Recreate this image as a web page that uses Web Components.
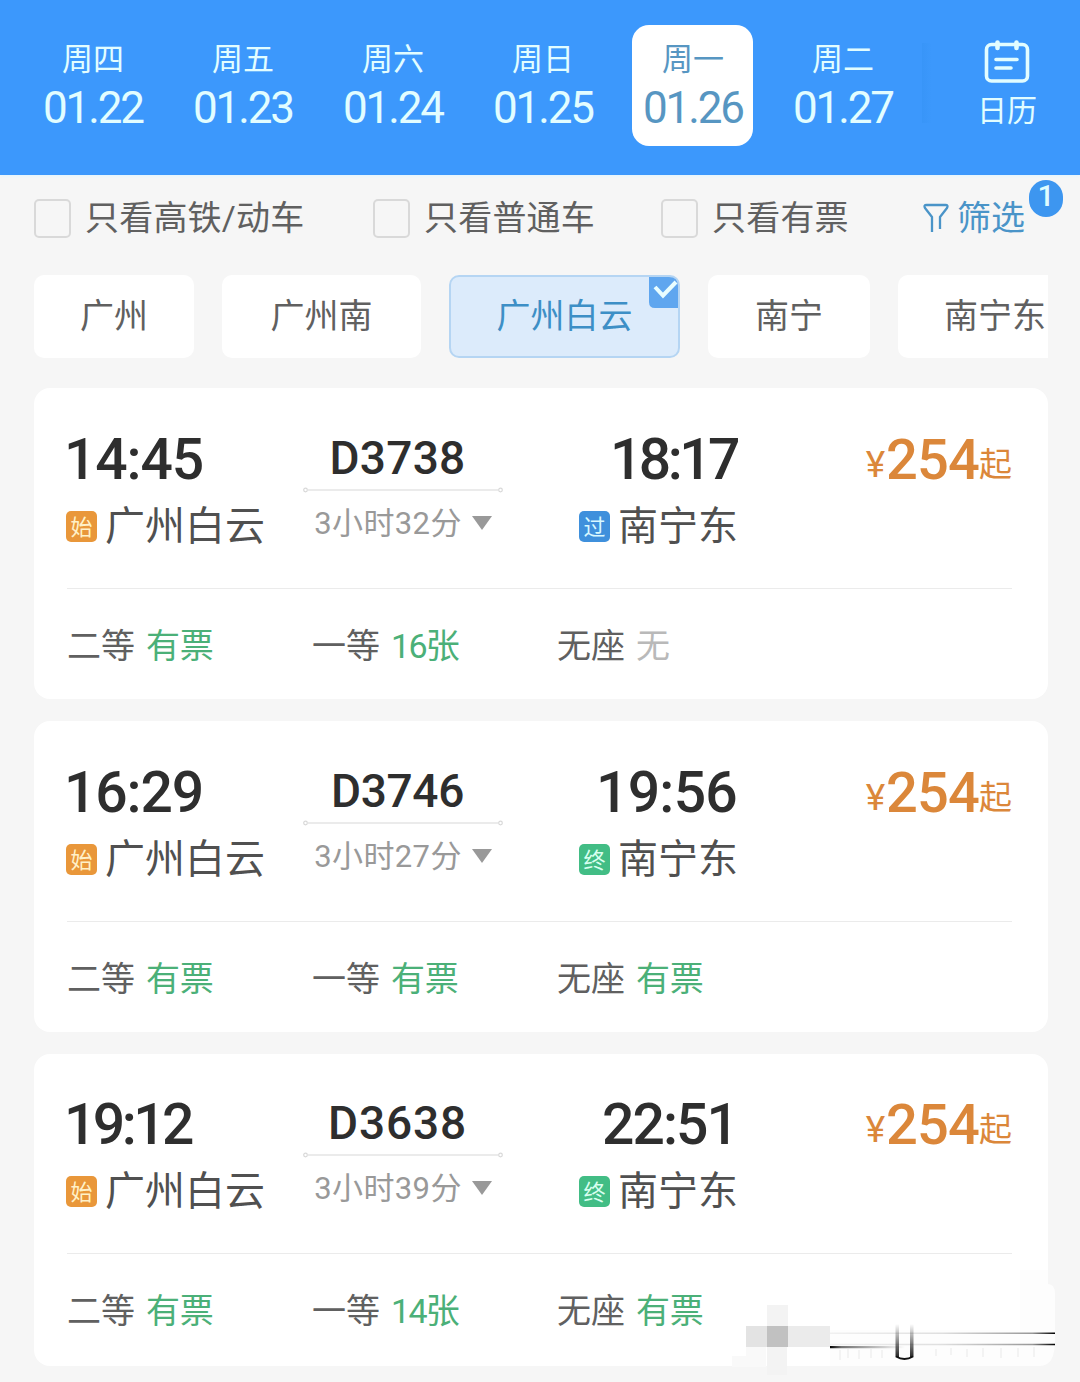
<!DOCTYPE html>
<html lang="zh-CN">
<head>
<meta charset="utf-8">
<title>广州 - 南宁</title>
<style>
    body {
        margin: 0;
        width: 1080px;
        height: 1382px;
        overflow: hidden;
        position: relative;
        background: #f6f6f6;
        color: #555;
        font-family: Roboto, "Noto Sans CJK SC", sans-serif;
    }
</style>
</head>
<body>
<train-app></train-app>
<script>
function define(name, html, setup) {
    customElements.define(name, class extends HTMLElement {
        constructor() {
            super();
            this.attachShadow({mode:'open'}).innerHTML = html;
        }
        connectedCallback() {
            if (setup) setup.call(this, this.shadowRoot);
        }
    });
}

/* text that is tracked to a given width */
define('fit-text', `
    <style>
        :host { display:block; white-space:nowrap; }
        span { display:inline-block; }
    </style>
    <span><slot></slot></span>
`, function(root) {
    const span = root.querySelector('span');
    const n = this.textContent.length;
    const space = (this.getAttribute('width') - span.getBoundingClientRect().width) / n;
    span.style.letterSpacing = space + 'px';
});

/* date bar */
define('day-tab', `
    <style>
        :host { display:flex; justify-content:center; color:#e2fdff; }
        .box {
            width:121px; height:121px;
            box-sizing:border-box;
            padding-top:13px;
            margin-left:-1px;
            border-radius:17px;
            display:flex; flex-direction:column; align-items:center;
        }
        :host([selected]) .box { background:#fff; color:#5796c2; }
        .week { font-size:31px; line-height:42px; padding:1px 0 0 1px; }
        .date { font-size:44px; line-height:54px; padding-left:1px; }
    </style>
    <div class=box>
        <div class=week><slot></slot></div>
    </div>
`, function(root) {
    const date = document.createElement('fit-text');
    date.className = 'date';
    date.setAttribute('width', 100);
    date.textContent = this.getAttribute('date');
    root.querySelector('.box').append(date);
});

define('calendar-button', `
    <style>
        :host {
            display:flex; flex-direction:column; align-items:center;
            box-sizing:border-box;
            padding:15px 0 0 16px;
            color:#e2fdff; font-size:30px; line-height:42px;
        }
        svg { display:block; margin-bottom:5px; }
    </style>
    <svg width=46 height=45 viewBox="0 0 46 45" fill=none stroke=currentColor stroke-width=4 stroke-linecap=round stroke-linejoin=round>
        <rect x=2.500 y=4.500 width=41 height=36.500 rx=5 stroke-width=3.600 />
        <path d="M13.500 2.500V8M32.500 2.500V8" stroke-width=4.600 />
        <path d="M12 19.500H33M12 28H27" stroke-width=3.600 />
    </svg>
    <slot></slot>
`);

define('date-bar', `
    <style>
        :host {
            display:grid;
            grid-template-columns:repeat(6, 150px) 1fr;
            height:175px;
            box-sizing:border-box;
            padding:25px 0 0 18px;
            background:#3c98fc;
            box-shadow:0 1px 4px #dff5ff;
        }
        calendar-button { background:linear-gradient(90deg, #3895f8, #3c98fc) 4px 18px / 10px 80px no-repeat; }
    </style>
    <slot></slot>
    <calendar-button>日历</calendar-button>
`);

/* filters */
define('check-option', `
    <style>
        :host { display:flex; align-items:center; gap:14px; font-size:34px; line-height:46px; color:#606060; }
        i { width:37px; height:39px; box-sizing:border-box; border:2px solid #d9d9d9; border-radius:5px; }
        span { letter-spacing:.2px; }
    </style>
    <i></i><span><slot></slot></span>
`);

define('filter-button', `
    <style>
        :host { display:flex; align-items:center; position:relative; gap:8px; font-size:34px; line-height:46px; color:#4a94c8; }
        b {
            position:absolute; left:106px; top:-15px;
            width:34px; height:37px;
            border-radius:17px;
            background:#3d96f0; color:#dffcff;
            font:500 30px/32px Roboto, sans-serif;
            text-align:center;
        }
    </style>
    <svg width=26 height=32 viewBox="0 0 26 32" fill=none stroke=currentColor stroke-width=2.300 stroke-linejoin=round>
        <path d="M9 30V15L2 6Q0.500 3 3.500 3H22.500Q25.500 3 24 6L17 15V27"/>
    </svg>
    <span><slot></slot></span>
    <b>1</b>
`);

define('filter-row', `
    <style>
        :host {
            display:grid;
            grid-template-columns:339px 288px 262px 1fr;
            height:86px;
            box-sizing:border-box;
            padding:20px 0 0 34px;
            align-items:start;
        }
    </style>
    <slot></slot>
`);

define('station-chip', `
    <style>
        :host {
            flex:none;
            display:flex; justify-content:center; align-items:center;
            position:relative;
            height:83px;
            box-sizing:border-box;
            padding-bottom:2px;
            border-radius:10px;
            background:#fff;
            font-size:34px; line-height:46px;
            color:#606060;
        }
        :host([selected]) { background:#dcebfb; border:2px solid #b5d5f3; color:#3d8fc6; }
        svg { display:none; position:absolute; right:0; top:0; }
        :host([selected]) svg { display:block; }
    </style>
    <slot></slot>
    <svg width=29 height=31 viewBox="0 0 29 31">
        <path d="M0 0H20Q29 0 29 9V31H6Q0 31 0 25Z" fill="#5fa6ef"/>
        <path d="M6 10L14 18.500L27 5" fill=none stroke="#e8fdff" stroke-width=4 />
    </svg>
`, function() {
    this.style.width = this.getAttribute('width') + 'px';
});

define('chip-row', `
    <style>
        :host { display:flex; gap:28px; margin:14px 32px 0 34px; overflow:hidden; }
    </style>
    <slot></slot>
`);

/* trains */
define('stop-tag', `
    <style>
        :host {
            flex:none;
            width:31px; height:31px;
            border-radius:5px;
            background:#e9973a;
            color:#fff1c8;
            font-size:22px; line-height:33px;
            text-align:center;
        }
        :host([kind=过]) { background:#3f90dc; color:#d8f8ff; }
        :host([kind=终]) { background:#42bd85; color:#d9fff0; }
    </style>
    <span></span>
`, function(root) {
    root.querySelector('span').textContent = this.getAttribute('kind');
});

define('seat-item', `
    <style>
        :host { display:flex; gap:12px; color:#606060; }
        .left { margin-left:-1px; color:#4bb078; letter-spacing:-.2px; }
        .left.count { letter-spacing:-1.700px; }
        :host([none]) .left { color:#b9b9b9; }
    </style>
    <span><slot></slot></span><span class=left></span>
`, function(root) {
    const left = root.querySelector('.left');
    left.textContent = this.getAttribute('left');
    left.classList.toggle('count', /\d/.test(left.textContent));
});

define('train-card', `
    <style>
        :host {
            display:block;
            height:311px;
            box-sizing:border-box;
            padding:calc(42px - var(--lift, 0px)) 36px 0 33px;
            border-radius:16px;
            background:#fff;
        }
        .trip {
            display:grid;
            grid-template-columns:236px 200px 235px 1fr;
            height:158px;
        }
        .time { font-size:57px; font-weight:500; line-height:60px; margin-left:-3px; color:#2e2e2e; }
        .stop { display:flex; align-items:center; gap:8px; margin:12px 0 0 -1px; font-size:40px; line-height:50px; color:#505050; }
        .stop stop-tag { margin-top:-1px; }
        .arrive { display:flex; flex-direction:column; align-items:flex-end; }
        .arrive .time { margin-right:1px; }
        .mid { display:flex; flex-direction:column; align-items:center; }
        .no { font-size:46px; font-weight:500; line-height:57px; margin-right:11px; color:#2e2e2e; }
        .mid svg { display:block; margin-top:-1px; }
        .time-used { display:flex; align-items:center; gap:10px; margin-top:7px; font-size:31px; line-height:46px; color:#999; letter-spacing:.4px; }
        .time-used i { border:solid transparent; border-width:14px 10.500px 0; border-top-color:#999; margin-top:-2px; }
        .price { display:flex; justify-content:flex-end; align-items:baseline; height:60px; line-height:60px; color:#db873a; font-size:33px; }
        .price b { font-size:56px; font-weight:500; }
        .price .yen { font-size:37px; width:21px; text-align:center; position:relative; top:-2px; }
        .price .from { position:relative; top:-3px; }
        .seats {
            display:grid;
            grid-template-columns:repeat(3, 245px);
            padding-top:34px;
            border-top:1px solid #ebebeb;
            font-size:34px; line-height:46px;
        }
    </style>
    <div class=trip></div>
    <div class=seats><slot></slot></div>
`, function(root) {
    const a = name => this.getAttribute(name);
    root.querySelector('.trip').innerHTML = `
        <div>
            <fit-text class=time width="${a('w1')}">${a('start')}</fit-text>
            <div class=stop><stop-tag kind=始></stop-tag><span>${a('from')}</span></div>
        </div>
        <div class=mid>
            <fit-text class=no width="${a('w2')}">${a('no')}</fit-text>
            <svg width=200 height=8 viewBox="0 0 200 8" fill=none stroke="#d8d8d8" stroke-width=1.200>
                <circle cx=2.500 cy=4 r=1.800 /><circle cx=197.500 cy=4 r=1.800 /><path d="M5 4H195"/>
            </svg>
            <div class=time-used><span>${a('used')}</span><i></i></div>
        </div>
        <div class=arrive>
            <fit-text class=time width="${a('w3')}">${a('end')}</fit-text>
            <div class=stop><stop-tag kind="${a('kind')}"></stop-tag><span>${a('to')}</span></div>
        </div>
        <div class=price><span class=yen>¥</span><fit-text width=93><b>254</b></fit-text><span class=from>起</span></div>
    `;
});

/* pixelated patch in the lower right corner */
define('corner-mosaic', `
    <style>
        :host { position:absolute; left:720px; top:1270px; }
        svg { display:block; }
    </style>
    <svg width=360 height=112 viewBox="0 0 360 112">
        <defs>
            <linearGradient id=r gradientUnits=userSpaceOnUse x1=110 x2=335><stop stop-color="#000" stop-opacity=.05 /><stop offset=.5 stop-color="#000" stop-opacity=.12 /><stop offset=.9 stop-color="#000" stop-opacity=.4 /><stop offset=1 stop-color="#000"/></linearGradient>
            <linearGradient id=l><stop stop-color="#000"/><stop offset=.15 stop-opacity=.55 /><stop offset=1 stop-color="#000" stop-opacity=0 /></linearGradient>
            <linearGradient id=u x2=0 y2=1><stop stop-color="#000" stop-opacity=0 /><stop offset=1 stop-color="#000" stop-opacity=.85 /></linearGradient>
        </defs>
        <path d="M300 0H328V14Q335 14 335 24V70Q335 96 320 96H110V60H300Z" fill="#fdfdfd"/>
        <path d="M12 97V86H26V77H46V97Z" fill="#f9f9f9"/>
        <path d="M47 35H68V56H47ZM47 77H67V105H47Z" fill="#f3f3f3"/>
        <path d="M26 56H47V77H26Z" fill="#e3e3e3"/>
        <path d="M47 56H68V77H47Z" fill="#c1c1c1"/>
        <path d="M68 56H110V77H68Z" fill="#ebebeb"/>
        <path d="M110 62.500H335V64H110ZM110 73.800H335V75.300H110Z" fill="url(#r)"/>
        <path d="M110 76H185V78.200H110Z" fill="url(#l)"/>
        <path d="M120 80V90M128 79V88M139 80V89M151 79V88M162 80V88M216 79V86M231 78V85M247 79V87M263 78V87M281 78V88M298 78V87M314 77V87" stroke="#f3f3f3" stroke-width=2 />
        <g fill="url(#u)"><path d="M175.500 54H179V87H175.500ZM190 54H193.500V87H190Z"/></g>
        <path d="M176 86.500Q184.500 91.500 193 86.500" fill=none stroke="#111" stroke-width=2 />
    </svg>
`);

define('train-app', `
    <style>
        :host { display:block; }
        .list { display:flex; flex-direction:column; gap:22px; margin:30px 32px 0 34px; }
        .last { --lift:1.500px; height:312px; }
    </style>
    <date-bar>
        <day-tab date="01.22">周四</day-tab>
        <day-tab date="01.23">周五</day-tab>
        <day-tab date="01.24">周六</day-tab>
        <day-tab date="01.25">周日</day-tab>
        <day-tab date="01.26" selected>周一</day-tab>
        <day-tab date="01.27">周二</day-tab>
    </date-bar>
    <filter-row>
        <check-option>只看高铁/动车</check-option>
        <check-option>只看普通车</check-option>
        <check-option>只看有票</check-option>
        <filter-button>筛选</filter-button>
    </filter-row>
    <chip-row>
        <station-chip width=160>广州</station-chip>
        <station-chip width=199>广州南</station-chip>
        <station-chip width=231 selected>广州白云</station-chip>
        <station-chip width=162>南宁</station-chip>
        <station-chip width=194>南宁东</station-chip>
    </chip-row>
    <div class=list>
        <train-card start="14:45" end="18:17" no=D3738 used=3小时32分 from=广州白云 to=南宁东 kind=过 w1=139 w2=136 w3=127>
            <seat-item left=有票>二等</seat-item>
            <seat-item left=16张>一等</seat-item>
            <seat-item left=无 none>无座</seat-item>
        </train-card>
        <train-card start="16:29" end="19:56" no=D3746 used=3小时27分 from=广州白云 to=南宁东 kind=终 w1=139 w2=133 w3=141>
            <seat-item left=有票>二等</seat-item>
            <seat-item left=有票>一等</seat-item>
            <seat-item left=有票>无座</seat-item>
        </train-card>
        <train-card class=last start="19:12" end="22:51" no=D3638 used=3小时39分 from=广州白云 to=南宁东 kind=终 w1=127 w2=139 w3=135>
            <seat-item left=有票>二等</seat-item>
            <seat-item left=14张>一等</seat-item>
            <seat-item left=有票>无座</seat-item>
        </train-card>
    </div>
    <corner-mosaic></corner-mosaic>
`);
</script>
</body>
</html>
